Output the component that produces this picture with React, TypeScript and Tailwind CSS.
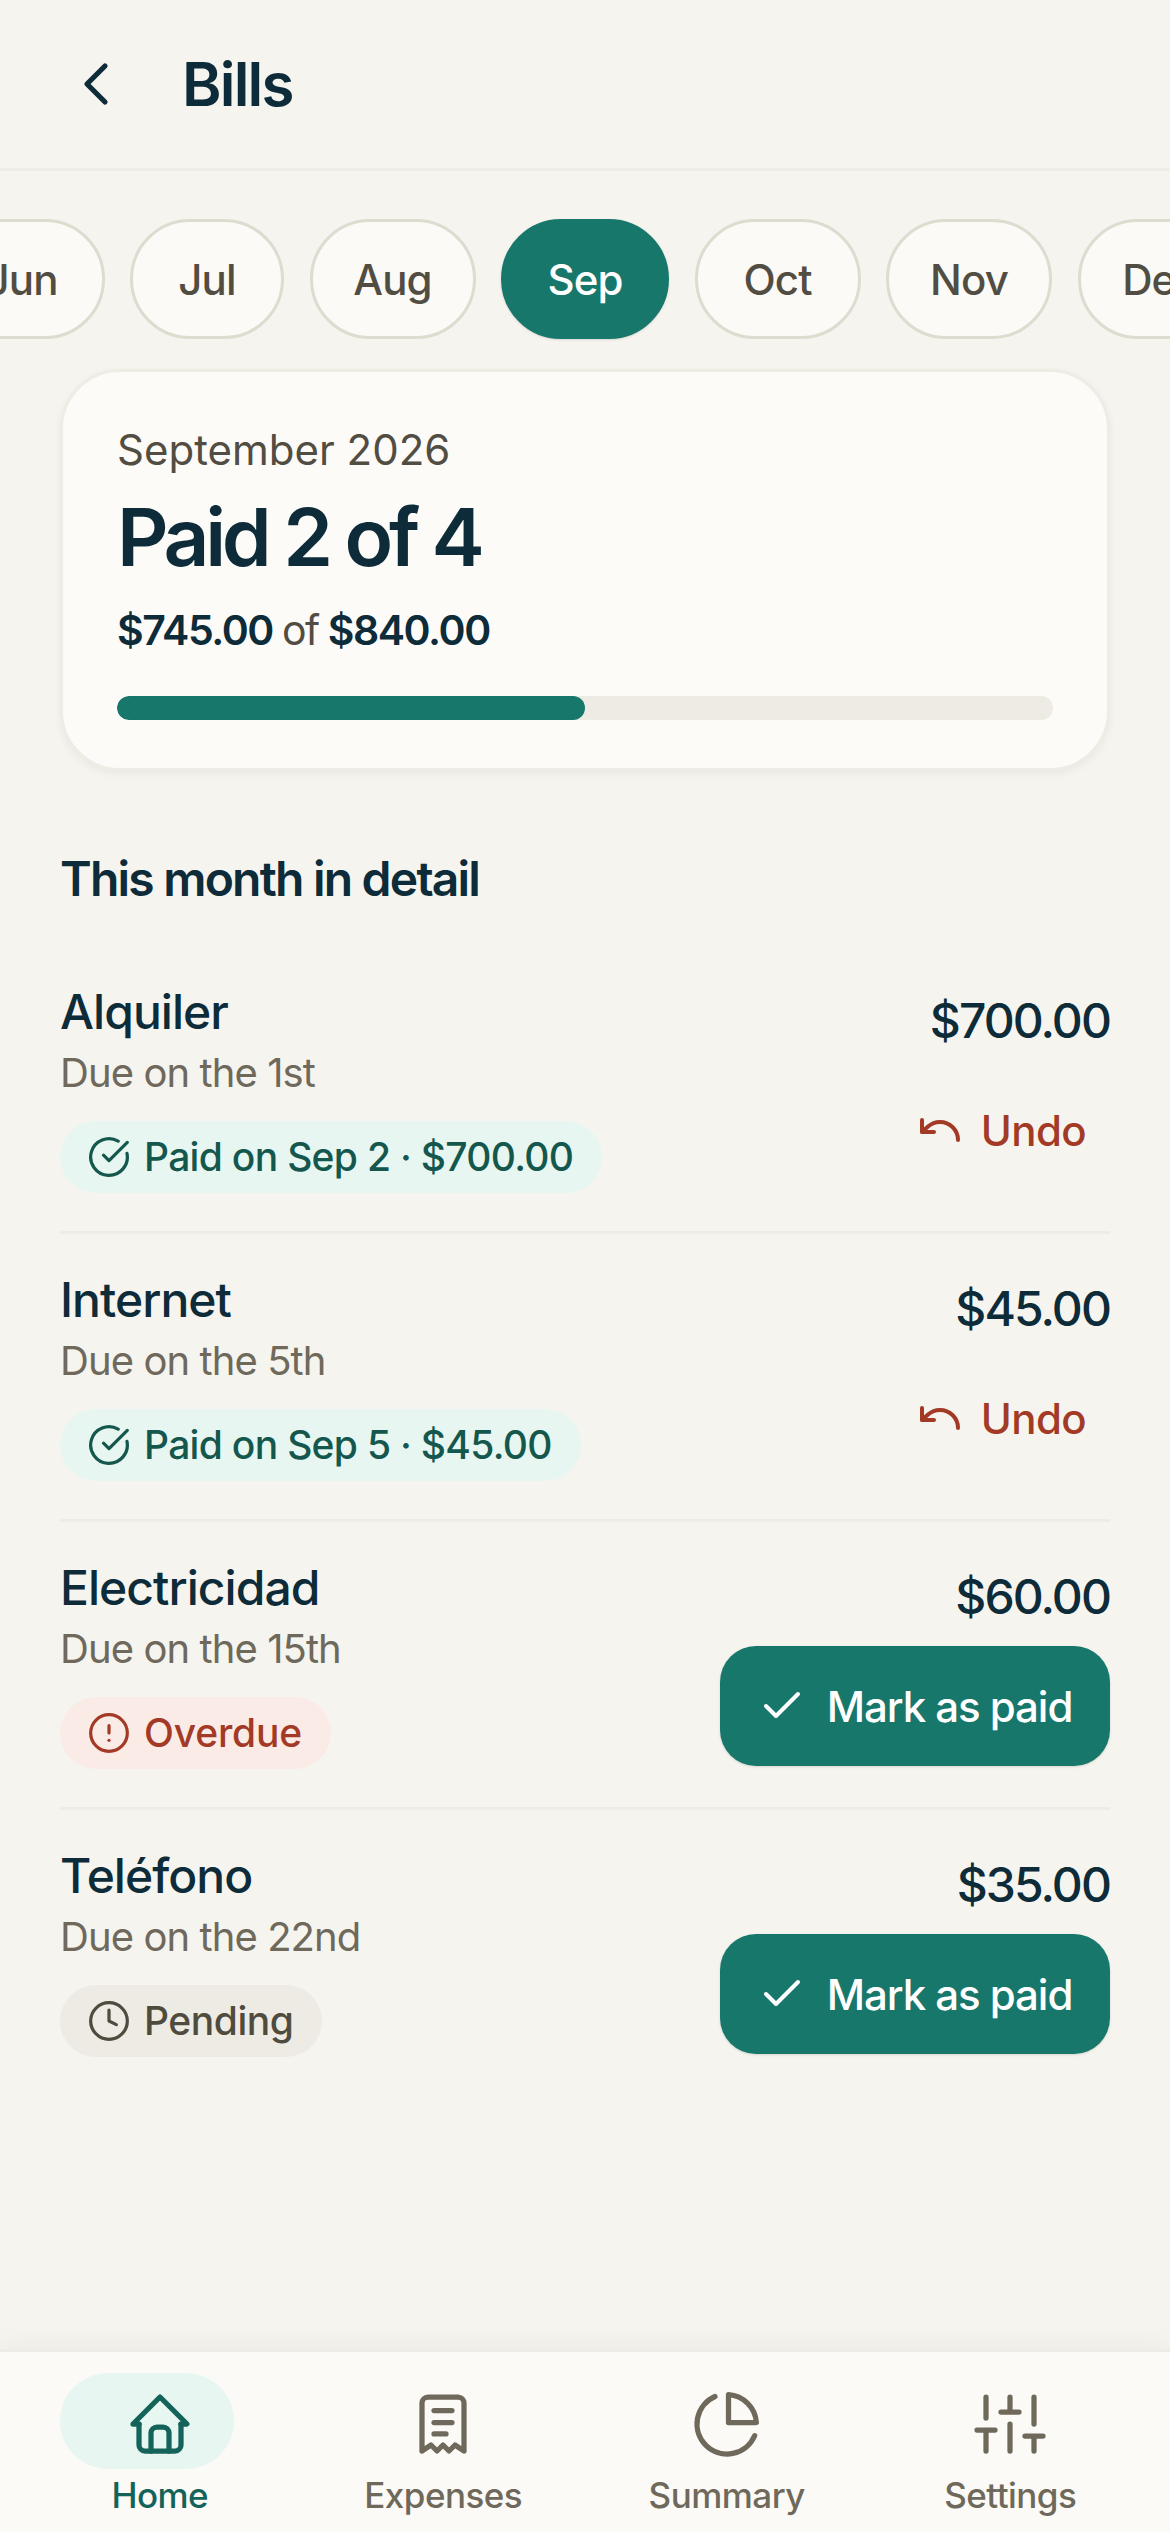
import { ChevronLeft, CircleCheckBig, CircleAlert, Clock, Undo, Check } from "lucide-react"

const months = [
  { label: "Jun", width: "w-[166px]" },
  { label: "Jul", width: "w-[154px]" },
  { label: "Aug", width: "w-[166px]" },
  { label: "Sep", width: "w-[168px]", active: true },
  { label: "Oct", width: "w-[166px]" },
  { label: "Nov", width: "w-[166px]" },
  { label: "Dec", width: "w-[166px]" },
]

type Status = "paid" | "overdue" | "pending"

const bills: { name: string; due: string; amount: string; status: Status; note: string }[] = [
  { name: "Alquiler", due: "Due on the 1st", amount: "$700.00", status: "paid", note: "Paid on Sep 2 · $700.00" },
  { name: "Internet", due: "Due on the 5th", amount: "$45.00", status: "paid", note: "Paid on Sep 5 · $45.00" },
  { name: "Electricidad", due: "Due on the 15th", amount: "$60.00", status: "overdue", note: "Overdue" },
  { name: "Teléfono", due: "Due on the 22nd", amount: "$35.00", status: "pending", note: "Pending" },
]

function StatusBadge({ status, note }: { status: Status; note: string }) {
  const tone = {
    paid: "bg-[#e8f6f1] text-[#14574d] tracking-[-0.018em]",
    overdue: "bg-[#fbebe7] text-[#a33a26] tracking-[-0.005em]",
    pending: "bg-[#edebe3] text-[#4f4b3f] tracking-[-0.012em]",
  }[status]
  const Icon = { paid: CircleCheckBig, overdue: CircleAlert, pending: Clock }[status]

  return (
    <div className={`inline-flex h-[72px] items-center gap-[13px] rounded-full pl-[27px] pr-[29px] text-[39px] font-medium ${tone}`}>
      <Icon size={44} strokeWidth={1.75} />
      <span>{note}</span>
    </div>
  )
}

function NavIcon({ children, className }: { children: React.ReactNode; className?: string }) {
  return (
    <svg
      viewBox="0 0 24 24"
      fill="none"
      stroke="currentColor"
      strokeWidth={1.75}
      strokeLinecap="round"
      strokeLinejoin="round"
      className={`h-[72px] w-[72px] ${className ?? ""}`}
    >
      {children}
    </svg>
  )
}

export default function App() {
  return (
    <div className="flex h-[2532px] w-[1170px] flex-col overflow-hidden bg-[#f5f4ef] font-['Inter',sans-serif] text-[#0d2b38]">
      {/* Header */}
      <header className="flex h-[171px] shrink-0 items-center border-b-[3px] border-[#eeece4] pl-[60px]">
        <ChevronLeft size={72} strokeWidth={1.75} />
        <h1 className="ml-[50px] text-[60px] font-semibold tracking-[-0.03em]">Bills</h1>
      </header>

      {/* Month pills */}
      <div className="ml-[-61.5px] mt-[48px] flex shrink-0 gap-[25.5px]">
        {months.map((m) => (
          <div
            key={m.label}
            className={`flex h-[120px] shrink-0 items-center justify-center rounded-full border-[3px] text-[42px] font-medium tracking-[-0.02em] ${m.width} ${
              m.active
                ? "border-[#18776b] bg-[#18776b] text-white shadow-sm"
                : "border-[#dedbcf] bg-[#fbfaf6] text-[#524d42]"
            }`}
          >
            {m.label}
          </div>
        ))}
      </div>

      <main className="flex-1 px-[60px]">
        {/* Summary card */}
        <section className="mt-[30px] h-[402px] rounded-[60px] border-[3px] border-[#eeece4] bg-[#fcfbf8] px-[54px] pt-[51px] shadow-[0_3px_9px_rgba(0,0,0,0.05)]">
          <p className="text-[42px] leading-[54px] text-[#524d42]">September 2026</p>
          <p className="mt-[12px] text-[80px] font-semibold leading-[96px] tracking-[-0.054em]">Paid 2 of 4</p>
          <p className="mt-[18px] text-[41px] font-semibold leading-[54px] tracking-[-0.035em]">
            $745.00 <span className="font-normal text-[#524d42]">of</span> $840.00
          </p>
          <div className="mt-[39px] h-[24px] overflow-hidden rounded-full bg-[#edebe3]">
            <div className="h-full w-[50%] rounded-full bg-[#18776b]" />
          </div>
        </section>

        <h2 className="mt-[78px] text-[48px] font-semibold leading-[60px] tracking-[-0.037em]">This month in detail</h2>

        {/* Bills */}
        <div className="mt-[37px]">
          {bills.map((bill) => (
            <div key={bill.name} className="flex h-[288px] justify-between border-b-[3px] border-[#eeece4] pt-[36px] last:border-b-0">
              <div>
                <p className="text-[48px] font-medium leading-[60px] tracking-[-0.02em]">{bill.name}</p>
                <p className="mt-[4px] text-[40px] leading-[54px] tracking-[-0.023em] text-[#6f695c]">{bill.due}</p>
                <div className="mt-[21px]">
                  <StatusBadge status={bill.status} note={bill.note} />
                </div>
              </div>
              <div className="flex flex-col items-end">
                <p className="pt-[3px] text-[48px] font-medium leading-[72px] tracking-[-0.04em]">{bill.amount}</p>
                {bill.status === "paid" ? (
                  <div className="mt-[13px] flex h-[120px] items-center gap-[17px] pr-[24px] text-[42px] font-medium tracking-[-0.015em] text-[#a33a26]">
                    <Undo size={48} strokeWidth={2} />
                    Undo
                  </div>
                ) : (
                  <div className="mt-[13px] flex h-[120px] w-[390px] items-center justify-center gap-[21px] rounded-[36px] bg-[#18776b] text-[42px] font-medium tracking-[-0.025em] text-white shadow-sm">
                    <Check size={48} strokeWidth={2} />
                    Mark as paid
                  </div>
                )}
              </div>
            </div>
          ))}
        </div>
      </main>

      {/* Bottom nav */}
      <nav className="grid h-[183px] shrink-0 grid-cols-4 border-t-[3px] border-[#eeece4] bg-[#fbfaf6] px-[18px] pt-[36px] text-[35px] font-medium tracking-[-0.015em] text-[#6f695c] shadow-[0_-6px_24px_rgba(0,0,0,0.04)]">
        <div className="relative flex flex-col items-center text-[#14635a]">
          <div className="absolute left-[42px] top-[-15px] h-[96px] w-[174px] rounded-full bg-[#e8f6f1]" />
          <NavIcon className="relative">
            <path d="M5 12H3l9-9 9 9h-2" />
            <path d="M5 12v7a2 2 0 0 0 2 2h10a2 2 0 0 0 2-2v-7" />
            <path d="M9 21v-6a2 2 0 0 1 2-2h2a2 2 0 0 1 2 2v6" />
          </NavIcon>
          <span className="relative mt-[13px] leading-[44px]">Home</span>
        </div>
        <div className="flex flex-col items-center">
          <NavIcon>
            <path d="M5 21V5a2 2 0 0 1 2-2h10a2 2 0 0 1 2 2v16l-3-2-2 2-2-2-2 2-2-2-3 2" />
            <path d="M9 7.5h6M9 11.5h6M9 15.3h4" />
          </NavIcon>
          <span className="mt-[13px] leading-[44px]">Expenses</span>
        </div>
        <div className="flex flex-col items-center">
          <NavIcon>
            <path d="M12.5 2.2a10 10 0 0 1 9.3 9.3h-9.3z" />
            <path d="M21.21 15.89A10 10 0 1 1 8 2.83" />
          </NavIcon>
          <span className="mt-[13px] leading-[44px]">Summary</span>
        </div>
        <div className="flex flex-col items-center">
          <NavIcon>
            <path d="M4 21v-7M4 10V3M12 21v-9M12 8V3M20 21v-5M20 12V3M1 14h6M9 8h6M17 16h6" />
          </NavIcon>
          <span className="mt-[13px] leading-[44px]">Settings</span>
        </div>
      </nav>
    </div>
  )
}
